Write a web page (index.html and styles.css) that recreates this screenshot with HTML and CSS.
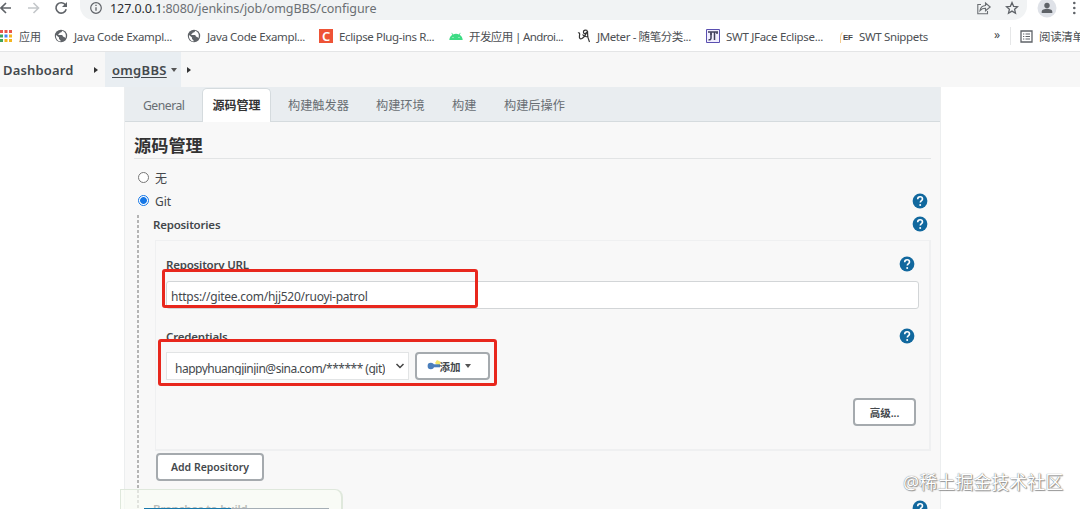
FILE: index.html
```
<!DOCTYPE html>
<html lang="zh">
<head>
    <meta charset="UTF-8">
    <title>omgBBS Config [Jenkins]</title>
    <link rel="stylesheet" href="styles.css">
</head>
<body>
<svg width="0" height="0" class="defs">
    <symbol id="globe" viewBox="0 0 14 14">
        <circle cx="7" cy="7" r="6.2" fill="#5f6368"/>
        <path d="M2 6l3 2.500v1.500l1.500 1.200v1.300C3.800 12.300 1.600 9.500 2 6zM8 1.800c0 1.600-1 1.700-2.300 1.900-.2 1.200-1.500 1-1.400 2.200h3.600c1 .2.7 1.600 1.600 1.900 1 .1 1.400.6 1.800 1.500 1.500-2.700.2-6.600-3.300-7.500z" fill="#fff"/>
    </symbol>
    <symbol id="help" viewBox="0 0 16 16">
        <circle cx="8" cy="8" r="7.400" fill="#11689e"/>
        <path d="M5.700 6.300c0-1.600 1-2.500 2.400-2.500s2.400.9 2.400 2.100c0 1.600-2.200 1.700-2.200 3.500" fill="none" stroke="#fff" stroke-width="1.600"/>
        <circle cx="8.200" cy="11.900" r="1" fill="#fff"/>
    </symbol>
</svg>
<div class="toolbar">
    <svg class="nav-btns" width="80" height="20" viewBox="0 0 80 20" fill="none" stroke-width="1.600">
        <path d="M11 8H1M6 3L1 8l5 5" stroke="#5f6368"/>
        <path d="M28 8h10M33.500 3l5 5-5 5" stroke="#c4c7ca"/>
        <path d="M65.500 5A5.200 5.200 0 1 0 66.200 9.300" stroke="#5f6368"/>
        <path d="M67 2v5h-5z" fill="#5f6368"/>
    </svg>
    <div class="address">
        <svg width="14" height="14" viewBox="0 0 14 14"><circle cx="7" cy="7" r="5.300" fill="none" stroke="#5f6368" stroke-width="1.200"/><path d="M7 6.200v3.600M7 3.800v1.300" stroke="#5f6368" stroke-width="1.300"/></svg>
        <span class="url"><b>127.0.0.1</b>:8080/jenkins/job/omgBBS/configure</span>
        <svg class="share" width="16" height="16" viewBox="0 0 16 16" fill="none" stroke="#6b6f73" stroke-width="1.100"><path d="M5 3.500H1.800v9.300h9.700V10"/><path d="M4 9.500c.5-3.200 2.400-4.800 5.500-5V2l4.700 4-4.700 3.800V7.300C7 7.300 5.400 8 4 9.500z"/></svg>
        <svg class="star" width="14" height="14" viewBox="0 0 14 14"><path d="M7 1.600l1.600 3.700 4 .4-3 2.600.9 3.900L7 10.100l-3.500 2.100.9-3.900-3-2.600 4-.4z" fill="none" stroke="#5f6368" stroke-width="1.300"/></svg>
    </div>
    <svg class="profile" width="53" height="20" viewBox="0 0 53 20" fill="#5f6368">
        <circle cx="20" cy="8" r="9.500" fill="#dfe2e8"/>
        <circle cx="20" cy="5.500" r="2.700"/>
        <path d="M14.700 13v-1.300c0-2 3-2.900 5.300-2.900s5.300.9 5.300 2.900V13z"/>
        <circle cx="47.300" cy="3" r="1.300"/><circle cx="47.300" cy="8" r="1.300"/><circle cx="47.300" cy="13" r="1.300"/>
    </svg>
</div>
<div class="bookmarks">
    <div class="mark m-apps">
        <svg width="12" height="12" viewBox="0 0 12 12"><path d="M0 0h3v3H0zM4.500 0h3v3h-3z" fill="#e8564a"/><path d="M9 0h3v3H9z" fill="#e8564a"/><path d="M0 4.500h3v3H0z" fill="#3fa45b"/><path d="M4.500 4.500h3v3h-3z" fill="#4285f4"/><path d="M9 4.500h3v3H9z" fill="#f4b51e"/><path d="M0 9h3v3H0z" fill="#3fa45b"/><path d="M4.500 9h3v3h-3zM9 9h3v3H9z" fill="#f4b51e"/></svg>
        <span>应用</span>
    </div>
    <div class="mark m-java"><svg width="14" height="14"><use href="#globe"/></svg><span>Java Code Exampl...</span></div>
    <div class="mark m-java2"><svg width="14" height="14"><use href="#globe"/></svg><span>Java Code Exampl...</span></div>
    <div class="mark m-plug"><i class="c-logo">C</i><span>Eclipse Plug-ins R...</span></div>
    <div class="mark m-android">
        <svg width="14" height="14" viewBox="0 0 14 14"><path d="M.3 11C.500 8.500 1.700 6.700 3.300 5.700L2.400 4l.6-.3 1 1.700a8 8 0 0 1 6 0l1-1.700.6.300-.9 1.700c1.600 1 2.800 2.800 3 5.300z" fill="#3ddc84"/><circle cx="4" cy="8.500" r=".5" fill="#fff"/><circle cx="10" cy="8.500" r=".5" fill="#fff"/></svg>
        <span>开发应用 | Androi...</span>
    </div>
    <div class="mark m-jmeter">
        <svg width="14" height="14" viewBox="0 0 14 14" fill="none" stroke="#333" stroke-width="1.200"><path d="M1 4c1.500-.8 2 .6 1.500 2.500C2 9 3 10.500 5 9.500s3.500-3.300 4.500-6"/><path d="M10.500 1.500C8 .500 6 1.500 6.500 3.500s3 1.500 4-1.500c-.3 4 .2 7.500 2 11M5.500 5.500c1.500 2 3.500 2.500 6 2.500"/></svg>
        <span>JMeter - 随笔分类...</span>
    </div>
    <div class="mark m-jface">
        <svg width="14" height="14" viewBox="0 0 14 14"><path d="M.5.500h13v13H.5z" fill="#f2efff" stroke="#5a4fb0"/><path d="M2 3h10M5 3v6c0 1.500-1 2-2.500 1.700M8.500 3v8M11 3v2M4 5h2" stroke="#40405c" stroke-width="1.500" fill="none"/></svg>
        <span>SWT JFace Eclipse...</span>
    </div>
    <div class="mark m-snip"><i class="ef-logo">EF</i><span>SWT Snippets</span></div>
    <span class="more">»</span>
    <div class="mark m-read">
        <svg width="13" height="13" viewBox="0 0 13 13" fill="none" stroke="#5f6368"><path d="M1 1h11v11H1z" stroke-width="1.300"/><path d="M3 4h1.300M3 6.500h1.300M3 9h1.300M5.500 4H10M5.500 6.500H10M5.500 9H10"/></svg>
        <span>阅读清单</span>
    </div>
</div>
<div class="breadcrumb">
    <a class="dash">Dashboard</a>
    <i class="arrow-right"></i>
    <a class="job"><span>omgBBS</span><i class="arrow-down"></i></a>
    <i class="arrow-right last"></i>
</div>
<div class="config">
    <ul class="tabs">
        <li class="t1">General</li>
        <li class="t2 active">源码管理</li>
        <li class="t3">构建触发器</li>
        <li class="t4">构建环境</li>
        <li class="t5">构建</li>
        <li class="t6">构建后操作</li>
    </ul>
    <h2>源码管理</h2>
    <div class="choice"><i class="radio"></i><span>无</span></div>
    <div class="choice"><i class="radio on"></i><span>Git</span><svg class="help" width="16" height="16"><use href="#help"/></svg></div>
    <div class="scm">
        <div class="row repos"><b>Repositories</b><svg class="help" width="16" height="16"><use href="#help"/></svg></div>
        <div class="repo-box">
            <div class="row label-url"><b>Repository URL</b><svg class="help" width="16" height="16"><use href="#help"/></svg></div>
            <div class="input"><span>https://gitee.com/hjj520/ruoyi-patrol</span></div>
            <div class="row label-cred"><b>Credentials</b><svg class="help" width="16" height="16"><use href="#help"/></svg></div>
            <div class="cred">
                <div class="select"><span>happyhuangjinjin@sina.com/****** (git)</span><svg width="10" height="8" viewBox="0 0 10 8"><path d="M1.500 2L5 5.500 8.500 2" fill="none" stroke="#444" stroke-width="1.500"/></svg></div>
                <div class="button add">
                    <svg width="14" height="12" viewBox="0 0 14 12"><path d="M8 3l2-3 4 2-2 5z" fill="#f4e66a"/><circle cx="3.800" cy="6" r="3.200" fill="#4a7ebb"/><path d="M5 4.300h8v3H5z" fill="#4a7ebb"/></svg>
                    <span>添加</span><i class="arrow-down"></i>
                </div>
            </div>
            <div class="button advanced">高级...</div>
            <div class="mark-box first"></div>
            <div class="mark-box second"></div>
        </div>
        <div class="button add-repo">Add Repository</div>
        <div class="row branches"><b>Branches to build</b><svg class="help" width="16" height="16"><use href="#help"/></svg></div>
    </div>
</div>
<div class="save-bar"><i class="save"></i><i class="apply"></i></div>
<div class="watermark">@稀土掘金技术社区</div>
</body>
</html>
```
FILE: styles.css
```
*{
    box-sizing: border-box;
}
body{
    position: relative;
    margin: 0;
    width: 1080px;
    height: 509px;
    overflow: hidden;
    background: #fff;
    color: #44484c;
    font-family: "Noto Sans", "Noto Sans CJK SC", sans-serif;
    font-size: 12px;
}
i{
    font-style: normal;
}
svg{
    display: block;
    flex: none;
}
.defs{
    position: absolute;
}

/* browser bars */
.toolbar{
    display: flex;
    height: 20px;
    overflow: hidden;
}
.address{
    display: flex;
    width: 947px;
    height: 20px;
    padding: 1px 8px 0 9px;
    background: #f1f3f4;
    border-radius: 0 0 14px 14px;
}
.url{
    margin-left: 7px;
    margin-top: -1px;
    line-height: 18px;
    font-size: 12.5px;
    letter-spacing: -.08px;
    white-space: nowrap;
    color: #6b6f73;
}
.url b{
    font-weight: 400;
    color: #2b2d30;
}
.share{
    margin-left: auto;
}
.star{
    margin-left: 13px;
}
.bookmarks{
    display: flex;
    height: 32px;
    border-bottom: 1px solid #e4e5e6;
}
.mark{
    display: flex;
    flex: none;
    align-items: center;
    height: 32px;
    white-space: nowrap;
    font-size: 11.5px;
    letter-spacing: -.35px;
    color: #4d5054;
}
.mark span{
    margin-left: 6px;
}
.m-apps{
    width: 54px;
}
.m-apps span{
    margin-left: 7px;
    font-size: 11px;
    letter-spacing: 0;
}
.m-java{
    width: 133px;
}
.m-java2{
    width: 132px;
}
.m-plug{
    width: 130px;
}
.m-android{
    width: 128px;
}
.m-android span, .m-jmeter span{
    letter-spacing: -.6px;
}
.m-jmeter{
    width: 129px;
}
.m-jmeter span{
    letter-spacing: -.4px;
}
.m-jface{
    width: 134px;
}
.m-jface span{
    letter-spacing: -.3px;
}
.m-snip{
    width: 153px;
}
.m-snip span{
    margin-left: 5px;
}
.c-logo{
    width: 14px;
    height: 14px;
    background: #ee5336;
    color: #fff;
    font-size: 13px;
    font-weight: 600;
    line-height: 14px;
    text-align: center;
}
.ef-logo{
    width: 14px;
    height: 13px;
    border-top: 1px solid transparent;
    border-left: 1px solid #f3c98b;
    border-top-left-radius: 7px;
    font: bold 8px/13px "Liberation Sans", sans-serif;
    padding-left: 2px;
    color: #444;
}
.more{
    flex: none;
    width: 16px;
    margin-left: 1px;
    line-height: 30px;
}
.m-read{
    height: 18px;
    margin-top: 7px;
    padding-left: 9px;
    border-left: 1px solid #e6e7e8;
    font-size: 11.5px;
}

/* breadcrumb */
.breadcrumb{
    display: flex;
    align-items: center;
    height: 35px;
    background: #f7f7f7;
    font-size: 13px;
    font-weight: 600;
    color: #44494d;
}
.dash{
    width: 90px;
    padding-left: 3px;
    letter-spacing: .15px;
}
.arrow-right{
    margin-left: 4px;
    border-left: 4px solid #333;
    border-top: 3px solid transparent;
    border-bottom: 3px solid transparent;
}
.arrow-right.last{
    margin-left: 6px;
}
.arrow-down{
    border-top: 4px solid #555;
    border-left: 3.500px solid transparent;
    border-right: 3.500px solid transparent;
}
.job{
    display: flex;
    align-items: center;
    width: 76px;
    height: 35px;
    margin-left: 7px;
    padding-left: 7px;
    background: #e9eef2;
}
.job span{
    width: 55px;
    margin-right: 4px;
    letter-spacing: .3px;
    text-decoration: underline;
    text-underline-offset: 2px;
}

/* job configuration */
.config{
    width: 817px;
    height: 422px;
    margin-left: 124px;
    border-left: 1px solid #eceeef;
    border-right: 1px solid #eceeef;
    background: #f8f8f8;
    overflow: hidden;
}
.tabs{
    display: flex;
    height: 35px;
    margin: 0;
    padding: 0;
    list-style: none;
    background: #e9edf0;
    border-bottom: 1px solid #d5dbde;
    font-size: 12.2px;
    line-height: 37px;
    color: #686e73;
}
.tabs li{
    white-space: nowrap;
}
.t1{
    width: 77px;
    padding-left: 18px;
    letter-spacing: -.5px;
}
.tabs .active{
    width: 69px;
    height: 34px;
    margin-top: 1px;
    border: 1px solid #d5dbde;
    border-bottom: 0;
    border-radius: 5px 5px 0 0;
    background: #fff;
    line-height: 34px;
    text-align: center;
    font-size: 12px;
    font-weight: 700;
    color: #333;
}
.t3{
    width: 105px;
    padding-left: 17px;
}
.t4{
    width: 76px;
}
.t5{
    width: 52px;
}
h2{
    width: 797px;
    height: 37px;
    margin: 0 0 0 9px;
    padding-top: 9px;
    border-bottom: 1px solid #e2e4e5;
    font-size: 17.2px;
    line-height: 30px;
    color: #333;
}
.choice{
    display: flex;
    align-items: center;
    height: 23px;
    padding: 0 13px;
}
h2 + .choice{
    margin-top: 7px;
}
.choice span{
    margin-left: 6px;
    padding-top: 1px;
}
.radio{
    width: 11px;
    height: 11px;
    border: 1px solid #777;
    border-radius: 50%;
    background: #fff;
}
.radio.on{
    border-color: #1677e6;
    background: radial-gradient(circle, #1677e6 3px, #fff 3.800px);
}
.help{
    margin-left: auto;
}
.choice .help{
    margin-right: -1px;
}
.scm{
    height: 300px;
    margin: 3px 10px 0 12px;
    padding-left: 18px;
    background: repeating-linear-gradient(#b4b4b4 0 3px, transparent 3px 5px) 0 0 / 2px 100% no-repeat;
}
.row{
    display: flex;
    align-items: center;
    height: 18px;
}
.row b{
    font-weight: 600;
    font-size: 11.5px;
    letter-spacing: -.2px;
}
.repos{
    padding: 0 2px 0 0;
    margin-left: -2px;
}
.repo-box{
    position: relative;
    width: 776px;
    height: 211px;
    margin-top: 7px;
    padding: 14px 10px 0 10px;
    border: 1px solid #eff0f1;
    border-width: 1px 2px 2px 1px;
}
.label-url, .label-cred{
    padding-right: 4px;
}
.input{
    height: 28px;
    margin-top: 8px;
    padding: 2px 4px;
    border: 1px solid #d2d5d7;
    border-radius: 3px;
    background: #fff;
    line-height: 26px;
    letter-spacing: -.26px;
}
.label-cred{
    margin-top: 18px;
}
.cred{
    display: flex;
    margin-top: 7px;
}
.select{
    display: flex;
    align-items: center;
    justify-content: space-between;
    width: 243px;
    height: 28px;
    margin-right: 6px;
    padding: 0 3px 0 8px;
    border: 1px solid #e2e4e5;
    background: #fff;
}
.select span{
    height: 14px;
    margin-top: 3px;
    line-height: 16px;
    letter-spacing: -.5px;
    overflow: hidden;
    white-space: nowrap;
}
.button{
    display: flex;
    align-items: center;
    justify-content: center;
    height: 28px;
    border: 2px solid #a5aaae;
    border-radius: 4px;
    background: #fff;
    font-size: 10.5px;
    font-weight: 600;
}
.add{
    width: 75px;
    padding-right: 8px;
}
.add svg{
    margin-right: -1px;
}
.add span{
    margin-right: 4px;
}
.advanced{
    width: 63px;
    margin: 18px 3px 0 auto;
}
.add-repo{
    width: 108px;
    margin-top: 2px;
    margin-left: 1px;
}
.branches{
    margin-top: 18px;
    margin-left: -2px;
    padding-right: 2px;
}

/* red annotation frames over the form */
.mark-box{
    position: absolute;
    border: 3px solid #e8271d;
    border-radius: 3px;
}
.mark-box.first{
    left: 6px;
    top: 28px;
    width: 316px;
    height: 39px;
}
.mark-box.second{
    left: 2px;
    top: 98px;
    width: 339px;
    height: 47px;
}

.save-bar{
    position: absolute;
    left: 120px;
    top: 489px;
    display: flex;
    align-items: flex-start;
    width: 223px;
    height: 30px;
    padding: 18px 0 0 23px;
    border: 2px solid #dfe8dc;
    border-width: 1px 2px 0 1px;
    border-radius: 0 8px 0 0;
    background: rgba(249, 252, 244, .65);
}
.save{
    width: 87px;
    height: 5px;
    background: #1878ab;
}
.apply{
    width: 98px;
    height: 5px;
    background: #a5aeb5;
}
.watermark{
    position: absolute;
    left: 903px;
    top: 468px;
    font-size: 18px;
    line-height: 28px;
    white-space: nowrap;
    color: #fff;
    text-shadow: 0 0 1px #555, 1px 1px 1px #999;
}
```
